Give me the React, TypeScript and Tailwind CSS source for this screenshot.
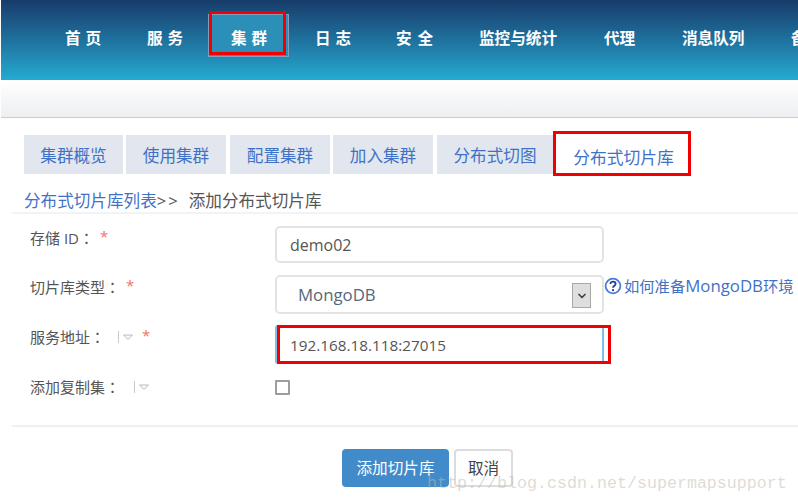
import { ChevronDown } from 'lucide-react'

const font = '[font-family:"Open_Sans","Noto_Sans_CJK_SC",sans-serif]'

function LabelMark() {
  return (
    <svg width="16" height="14" viewBox="0 0 16 14" className="shrink-0">
      <line x1="0.5" y1="1" x2="0.5" y2="13" stroke="#c9c9c9" />
      <path d="M5.5 5 H14.5 L10 9.5 Z" fill="#f7f7f7" stroke="#bdbdbd" />
    </svg>
  )
}

function Star() {
  return <span className="text-[#f4706b] text-[15px] leading-none relative -top-[2px]">*</span>
}

// 冒号居中，用繁体字形
function Colon() {
  return <span className="[font-family:'Noto_Sans_CJK_TC',sans-serif]">：</span>
}

function Tab({ label, width }: { label: string; width: string }) {
  return (
    <div className={`${width} shrink-0 h-[39px] pt-[4px] bg-[#e2e6ee] text-[#3f72c6] text-[16.6px] flex items-center justify-center`}>
      {label}
    </div>
  )
}

export default function App() {
  return (
    <div className={`relative w-[798px] h-[504px] overflow-hidden bg-white ${font}`}>
      {/* 顶部导航 */}
      <div className="ml-px h-[80px] bg-gradient-to-b from-[#173c6b] to-[#24abd2] flex items-center pl-[64px] text-white font-bold text-[15.6px] whitespace-nowrap pb-[2px]">
        <span className="shrink-0 w-[36px] tracking-[5px]">首页</span>
        <span className="shrink-0 w-[36px] ml-[46px] tracking-[5px]">服务</span>
        <span className="relative shrink-0 w-[36px] ml-[48px] tracking-[5px]">
          <span className="absolute left-[-23px] top-[-13px] w-[81px] h-[43px] bg-[#2b8fb8] border border-[#7f9fbf]" />
          <span className="absolute left-[-22px] top-[-16px] w-[77px] h-[44px] border-[3px] border-[#f00000]" />
          <span className="relative">集群</span>
        </span>
        <span className="shrink-0 w-[36px] ml-[48px] tracking-[5px]">日志</span>
        <span className="shrink-0 w-[37px] ml-[45px] tracking-[6px]">安全</span>
        <span className="shrink-0 w-[78px] ml-[46px]">监控与统计</span>
        <span className="shrink-0 w-[31px] ml-[47px]">代理</span>
        <span className="shrink-0 w-[62px] ml-[47px]">消息队列</span>
        <span className="shrink-0 ml-[47px]">备份</span>
      </div>

      {/* 灰色工具条 */}
      <div className="ml-px h-[38px] bg-gradient-to-b from-white to-[#eeeff2] border-b border-[#c5ced8]" />

      {/* 选项卡 */}
      <div className="flex pl-[24px] pt-[17px] gap-[3px] items-start">
        <Tab label="集群概览" width="w-[99px]" />
        <Tab label="使用集群" width="w-[100px]" />
        <Tab label="配置集群" width="w-[100px] ml-[1px]" />
        <Tab label="加入集群" width="w-[100px]" />
        <Tab label="分布式切图" width="w-[116px] ml-[1px]" />
        <div className="relative shrink-0 w-[135px] h-[39px] pt-[7px] bg-white text-[#3f72c6] text-[16.8px] flex items-center justify-center">
          <span className="absolute -left-[3px] -top-[4px] w-[138px] h-[45px] border-[3px] border-[#f00000]" />
          分布式切片库
        </div>
      </div>

      {/* 面包屑 */}
      <div className="ml-[12px] mt-[12px] h-[28px] pl-[12px] border-b-2 border-[#f3f3f3] text-[16.6px] leading-[29px] whitespace-nowrap text-[#555]">
        <span className="text-[#3f72c6]">分布式切片库列表</span>
        <span className="tracking-[2px]">&gt;&gt;</span>
        <span className="ml-[9px]">添加分布式切片库</span>
      </div>

      {/* 表单 */}
      <div className="pt-[12px] text-[15px] text-[#555]">
        <div className="flex items-start h-[37px]">
          <div className="w-[275px] pl-[30px] pt-[1px] flex items-center">
            存储 ID<Colon />
            <span className="ml-[6px]"><Star /></span>
          </div>
          <div className="w-[329px] h-[37px] border-2 border-[#e3e3e3] rounded-[5px] pl-[13px] text-[16px] leading-[35px]">
            demo02
          </div>
        </div>

        <div className="flex items-start h-[39px] mt-[12px]">
          <div className="w-[275px] pl-[30px] pt-[1px] flex items-center">
            切片库类型<Colon />
            <span className="ml-[6px]"><Star /></span>
          </div>
          <div className="relative w-[329px] h-[39px] border-2 border-[#e3e3e3] rounded-[5px] pl-[21px] text-[16.8px] leading-[36px] text-[#56677a]">
            MongoDB
            <div className="absolute right-[11px] top-[6px] w-[19px] h-[25px] bg-[#dedede] border border-[#a8a8a8] flex items-center justify-center">
              <ChevronDown size={12} strokeWidth={3.5} className="text-[#444]" />
            </div>
          </div>
          <svg width="18" height="18" viewBox="0 0 18 18" className="mt-[2px] shrink-0">
            <circle cx="9" cy="9" r="7.4" fill="#fff" stroke="#4a7bd8" strokeWidth="1.8" />
            <path d="M6.4 7 C6.4 3.9 11.6 3.9 11.6 7 C11.6 8.8 9 8.8 9 10.8" fill="none" stroke="#1f3f8f" strokeWidth="1.8" />
            <circle cx="9" cy="13.2" r="1.1" fill="#1f3f8f" />
          </svg>
          <span className="ml-[2px] text-[#3f72c6] text-[15.3px] leading-[22px] whitespace-nowrap">
            如何准备<span className="text-[16.8px]">MongoDB</span>环境
          </span>
        </div>

        <div className="flex items-start h-[39px] mt-[11px]">
          <div className="w-[275px] pl-[30px] pt-[1px] flex items-center">
            服务地址<Colon />
            <span className="ml-[13px] flex"><LabelMark /></span>
            <span className="ml-[8px]"><Star /></span>
          </div>
          <div className="relative w-[329px] h-[39px] border-x-2 border-[#7cc0ea] rounded-[3px] pl-[13px] text-[15.3px] leading-[41px]">
            <span className="absolute left-0 top-0 w-[334px] h-[39px] border-[3px] border-[#f00000]" />
            192.168.18.118:27015
          </div>
        </div>

        <div className="flex items-center h-[16px] mt-[15px]">
          <div className="w-[275px] pl-[30px] flex items-center">
            添加复制集<Colon />
            <span className="ml-[14px] flex"><LabelMark /></span>
          </div>
          <div className="w-[15px] h-[15px] border-2 border-[#9d9d9d] rounded-[1px]" />
        </div>
      </div>

      {/* 底部按钮 */}
      <div className="ml-[12px] mt-[30px] border-t-2 border-[#f0f0f0] pt-[22px] pl-[330px] flex gap-[5px]">
        <div className="w-[107px] h-[38px] rounded-[4px] bg-[#428bca] text-white text-[15.6px] pt-[1px] flex items-center justify-center">
          添加切片库
        </div>
        <div className="w-[59px] h-[38px] rounded-[4px] border-2 border-[#dcdcdc] text-[#444] text-[15.6px] pt-[1px] flex items-center justify-center">
          取消
        </div>
      </div>

      {/* 水印 */}
      <span className="absolute left-[427px] top-[474px] text-[16.67px] leading-[20px] whitespace-nowrap text-[#bdb8ae]/50 [font-family:'Liberation_Mono',monospace]">
        http://blog.csdn.net/supermapsupport
      </span>
    </div>
  )
}
